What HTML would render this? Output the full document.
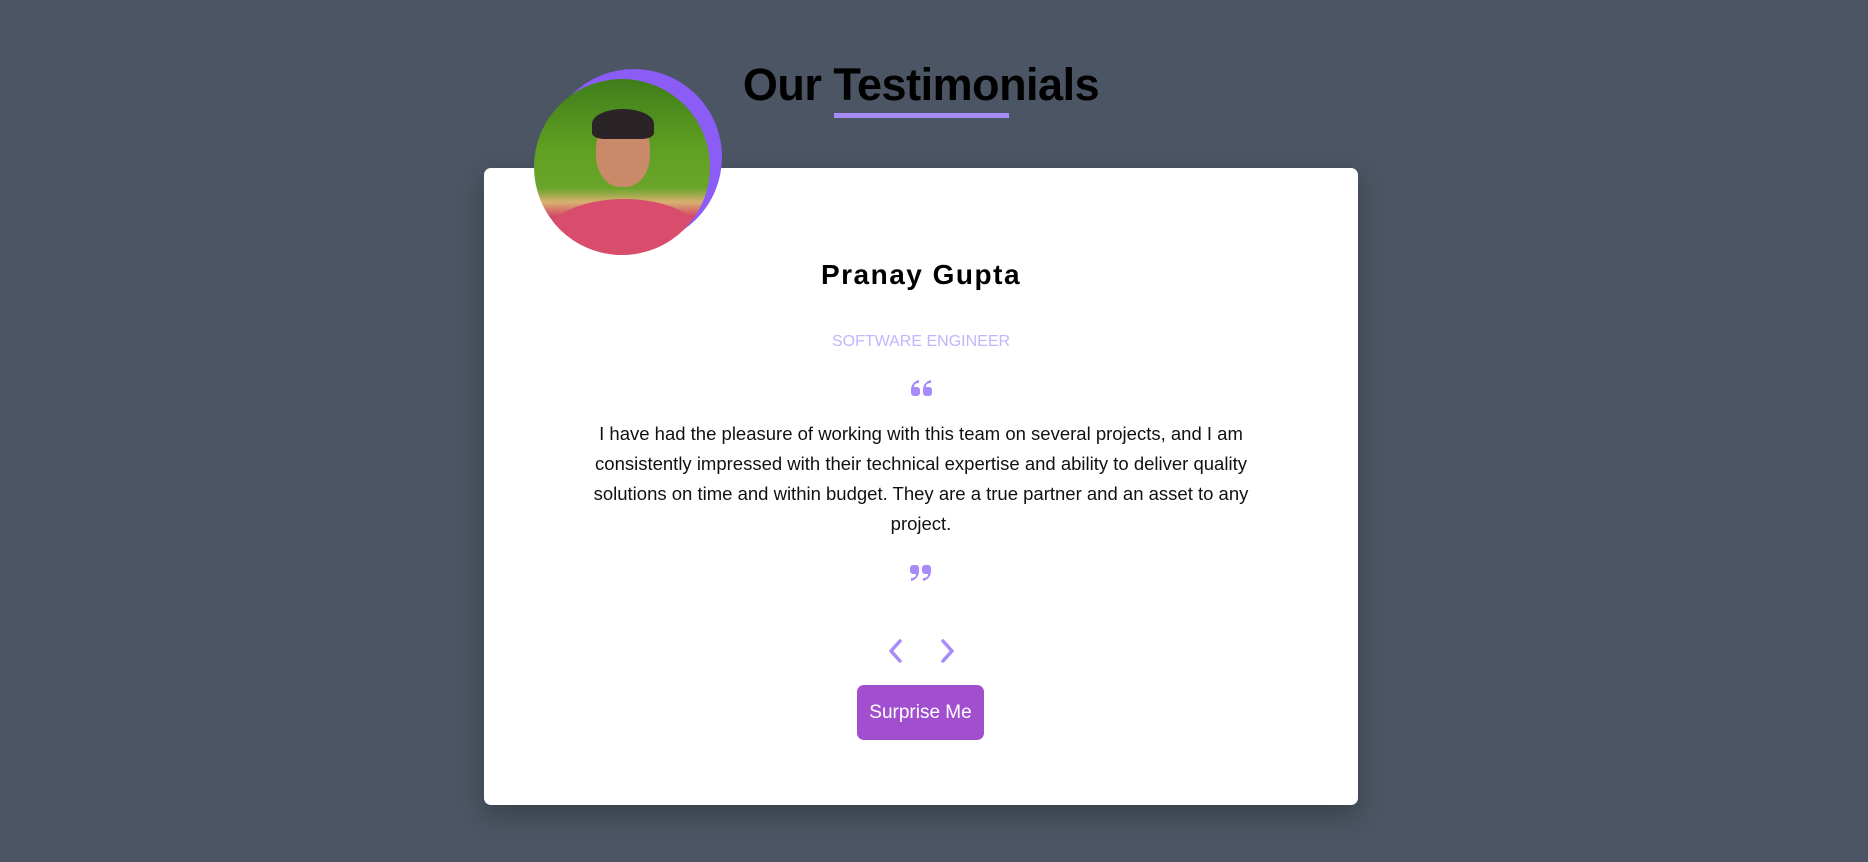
<!DOCTYPE html>
<html><head><meta charset="utf-8"><style>
*{margin:0;padding:0;box-sizing:border-box}
body{width:1868px;height:862px;background:#4b5563;position:relative;overflow:hidden;font-family:"Liberation Sans",sans-serif}
.title{position:absolute;left:0;width:1842px;top:59px;text-align:center;font-size:45px;font-weight:bold;color:#000;letter-spacing:-0.5px}
.ul{position:absolute;left:834px;top:113px;width:175px;height:5px;background:#a78bfa}
.card{position:absolute;left:484px;top:168px;width:874px;height:637px;background:#fff;border-radius:7px;box-shadow:0 10px 25px rgba(0,0,0,.25)}
.pc{position:absolute;left:546px;top:69px;width:176px;height:176px;border-radius:50%;background:#8b5cf6}
.ph{position:absolute;left:534px;top:79px;width:176px;height:176px;border-radius:50%;overflow:hidden;background:linear-gradient(#3f7d1a 0%,#5fa022 40%,#6aa52a 62%,#d9b070 70%,#d34a66 78%,#e05474 100%)}
.face{position:absolute;left:62px;top:38px;width:54px;height:70px;border-radius:45%;background:#c98a6a}
.hair{position:absolute;left:58px;top:30px;width:62px;height:30px;border-radius:50% 50% 20% 20%;background:#2a2426}
.body{position:absolute;left:10px;top:120px;width:160px;height:80px;border-radius:50% 50% 0 0;background:#d94d6c}
.c{position:absolute;left:484px;width:874px;text-align:center}
.name{top:259px;font-size:28px;font-weight:bold;letter-spacing:1.5px;color:#000}
.role{top:333px;font-size:16px;color:#c4b5fd}
.txt{position:absolute;left:566px;width:710px;top:419px;text-align:center;font-size:18.5px;line-height:30px;color:#111}
.btn{position:absolute;left:857px;top:685px;width:127px;height:55px;border-radius:7px;background:#a24fcf;color:#fff;font-size:19px;text-align:center;line-height:55px}
</style></head><body>
<div class="title">Our Testimonials</div>
<div class="ul"></div>
<div class="card"></div>
<div class="pc"></div>
<div class="ph"><div class="body"></div><div class="face"></div><div class="hair"></div></div>
<div class="c name">Pranay Gupta</div>
<div class="c role">SOFTWARE ENGINEER</div>
<svg style="position:absolute;left:910px;top:379px" width="22" height="18" viewBox="0 0 22 18"><g fill="#a78bfa"><path d="M9 1 C4 2 1 6 1 11 v3 a3 3 0 0 0 3 3 h3 a3 3 0 0 0 3 -3 v-3 a3 3 0 0 0 -3 -3 h-3 C4 5 6 4 9 4z"/><path d="M21 1 C16 2 13 6 13 11 v3 a3 3 0 0 0 3 3 h3 a3 3 0 0 0 3 -3 v-3 a3 3 0 0 0 -3 -3 h-3 C16 5 18 4 21 4z"/></g></svg>
<div class="txt">I have had the pleasure of working with this team on several projects, and I am consistently impressed with their technical expertise and ability to deliver quality solutions on time and within budget. They are a true partner and an asset to any project.</div>
<svg style="position:absolute;left:910px;top:564px" width="22" height="18" viewBox="0 0 22 18"><g fill="#a78bfa" transform="rotate(180 11 9)"><path d="M9 1 C4 2 1 6 1 11 v3 a3 3 0 0 0 3 3 h3 a3 3 0 0 0 3 -3 v-3 a3 3 0 0 0 -3 -3 h-3 C4 5 6 4 9 4z"/><path d="M21 1 C16 2 13 6 13 11 v3 a3 3 0 0 0 3 3 h3 a3 3 0 0 0 3 -3 v-3 a3 3 0 0 0 -3 -3 h-3 C16 5 18 4 21 4z"/></g></svg>
<svg style="position:absolute;left:884px;top:638px" width="80" height="26" viewBox="0 0 80 26"><path d="M16 3 L7 13 L16 23" fill="none" stroke="#a78bfa" stroke-width="3.5" stroke-linecap="round" stroke-linejoin="round"/><path d="M59 3 L68 13 L59 23" fill="none" stroke="#a78bfa" stroke-width="3.5" stroke-linecap="round" stroke-linejoin="round"/></svg>
<div class="btn">Surprise Me</div>
</body></html>
